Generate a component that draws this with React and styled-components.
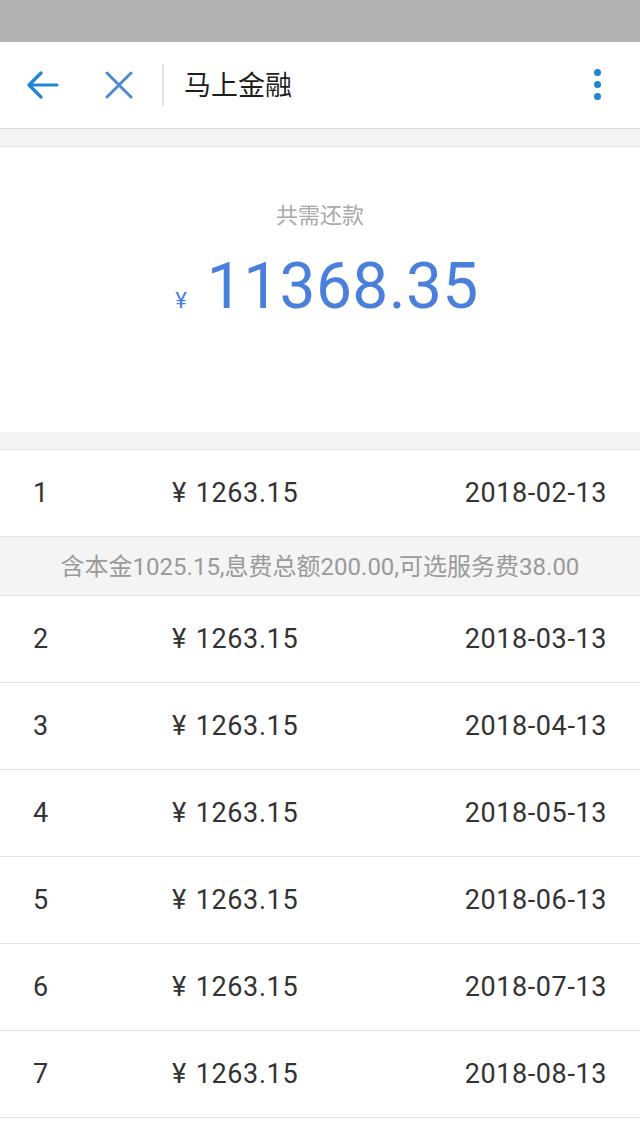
import React from "react";
import styled, { createGlobalStyle } from "styled-components";

const GlobalStyle = createGlobalStyle`
  body {
    margin: 0;
    background: #ffffff;
    font-family: Roboto, "Noto Sans CJK SC", sans-serif;
  }
`;

const plans = [
  { no: 1, amount: "1263.15", date: "2018-02-13", detail: "含本金1025.15,息费总额200.00,可选服务费38.00" },
  { no: 2, amount: "1263.15", date: "2018-03-13" },
  { no: 3, amount: "1263.15", date: "2018-04-13" },
  { no: 4, amount: "1263.15", date: "2018-05-13" },
  { no: 5, amount: "1263.15", date: "2018-06-13" },
  { no: 6, amount: "1263.15", date: "2018-07-13" },
  { no: 7, amount: "1263.15", date: "2018-08-13" },
];

const App = () => {
  return (
    <Page>
      <GlobalStyle />
      <StatusBar />
      <Header>
        <IconButton aria-label="back" $gap={38}>
          <svg width="32" height="28" viewBox="0 0 32 28" fill="none" stroke="#1f86d6" strokeWidth="3.2" strokeLinecap="round" strokeLinejoin="round">
            <path d="M30 14H3M14 2L2 14l12 12" />
          </svg>
        </IconButton>
        <IconButton aria-label="close" $gap={26}>
          <svg width="28" height="28" viewBox="0 0 28 28" fill="none" stroke="#4f8ad3" strokeWidth="3" strokeLinecap="round">
            <path d="M2 2l24 24M26 2L2 26" />
          </svg>
        </IconButton>
        <Divider />
        <Title>马上金融</Title>
        <Menu aria-label="more">
          <Dot />
          <Dot />
          <Dot />
        </Menu>
      </Header>
      <Gap />
      <Summary>
        <SummaryLabel>共需还款</SummaryLabel>
        <Total>
          <Yen>¥</Yen>
          <TotalValue>11368.35</TotalValue>
        </Total>
      </Summary>
      <Gap />
      <List>
        {plans.map((p) => (
          <React.Fragment key={p.no}>
            <Row>
              <Index>{p.no}</Index>
              <Amount>
                <Currency>¥</Currency>
                {p.amount}
              </Amount>
              <DateText>{p.date}</DateText>
            </Row>
            {p.detail && <Detail>{p.detail}</Detail>}
          </React.Fragment>
        ))}
      </List>
    </Page>
  );
};

const Page = styled.div`
  width: 640px;
  min-height: 1138px;
  background: #ffffff;
  overflow: hidden;
`;

const StatusBar = styled.div`
  height: 42px;
  background: #b1b1b1;
`;

const Header = styled.div`
  height: 86px;
  display: flex;
  align-items: center;
  padding: 0 39px 0 24px;
  border-bottom: 1px solid #dcdcdc;
  background: #ffffff;
`;

const IconButton = styled.button`
  width: 38px;
  height: 44px;
  padding: 0;
  border: none;
  background: none;
  display: flex;
  align-items: center;
  justify-content: center;
  margin-right: ${(p) => p.$gap}px;
  cursor: pointer;
`;

const Divider = styled.div`
  width: 2px;
  height: 42px;
  background: #e3e3e3;
  margin: 0 20px 0 -2px;
`;

const Title = styled.div`
  flex: 1;
  font-size: 27px;
  color: #1e1e1e;
  font-family: "Noto Sans CJK SC", sans-serif;
  margin-top: -4px;
`;

const Menu = styled.div`
  display: flex;
  flex-direction: column;
  gap: 5px;
  margin-top: -2px;
`;

const Dot = styled.span`
  width: 7px;
  height: 7px;
  border-radius: 50%;
  background: #1f86d6;
`;

const Gap = styled.div`
  height: 17px;
  background: #f3f3f3;
  border-bottom: 1px solid #e6e6e6;
`;

const Summary = styled.div`
  height: 285px;
  display: flex;
  flex-direction: column;
  align-items: center;
  background: #ffffff;
`;

const SummaryLabel = styled.div`
  margin-top: 50px;
  font-size: 22px;
  color: #a9a9a9;
  font-family: "Noto Sans CJK SC", sans-serif;
`;

const Total = styled.div`
  display: flex;
  align-items: baseline;
  margin-top: 20px;
  margin-left: 14px;
`;

const Yen = styled.span`
  font-size: 22px;
  color: #4a7fdc;
  margin-right: 20px;
`;

const TotalValue = styled.span`
  font-size: 64px;
  letter-spacing: 0.4px;
  color: #4a7fdc;
  line-height: 76px;
`;

const List = styled.div`
  display: flex;
  flex-direction: column;
`;

const Row = styled.div`
  height: 86px;
  display: grid;
  grid-template-columns: 139px 1fr auto;
  align-items: center;
  padding: 0 33px;
  border-bottom: 1px solid #e4e4e4;
  font-size: 27px;
  color: #333333;
  letter-spacing: 0.6px;
`;

const Index = styled.span``;

const Amount = styled.span``;

const Currency = styled.span`
  margin-right: 9px;
`;

const DateText = styled.span`
  text-align: right;
`;

const Detail = styled.div`
  height: 59px;
  display: flex;
  align-items: center;
  justify-content: center;
  background: #f4f4f4;
  border-bottom: 1px solid #e4e4e4;
  font-size: 24px;
  color: #9a9a9a;
  padding-bottom: 4px;
  box-sizing: border-box;
`;

export default App;
